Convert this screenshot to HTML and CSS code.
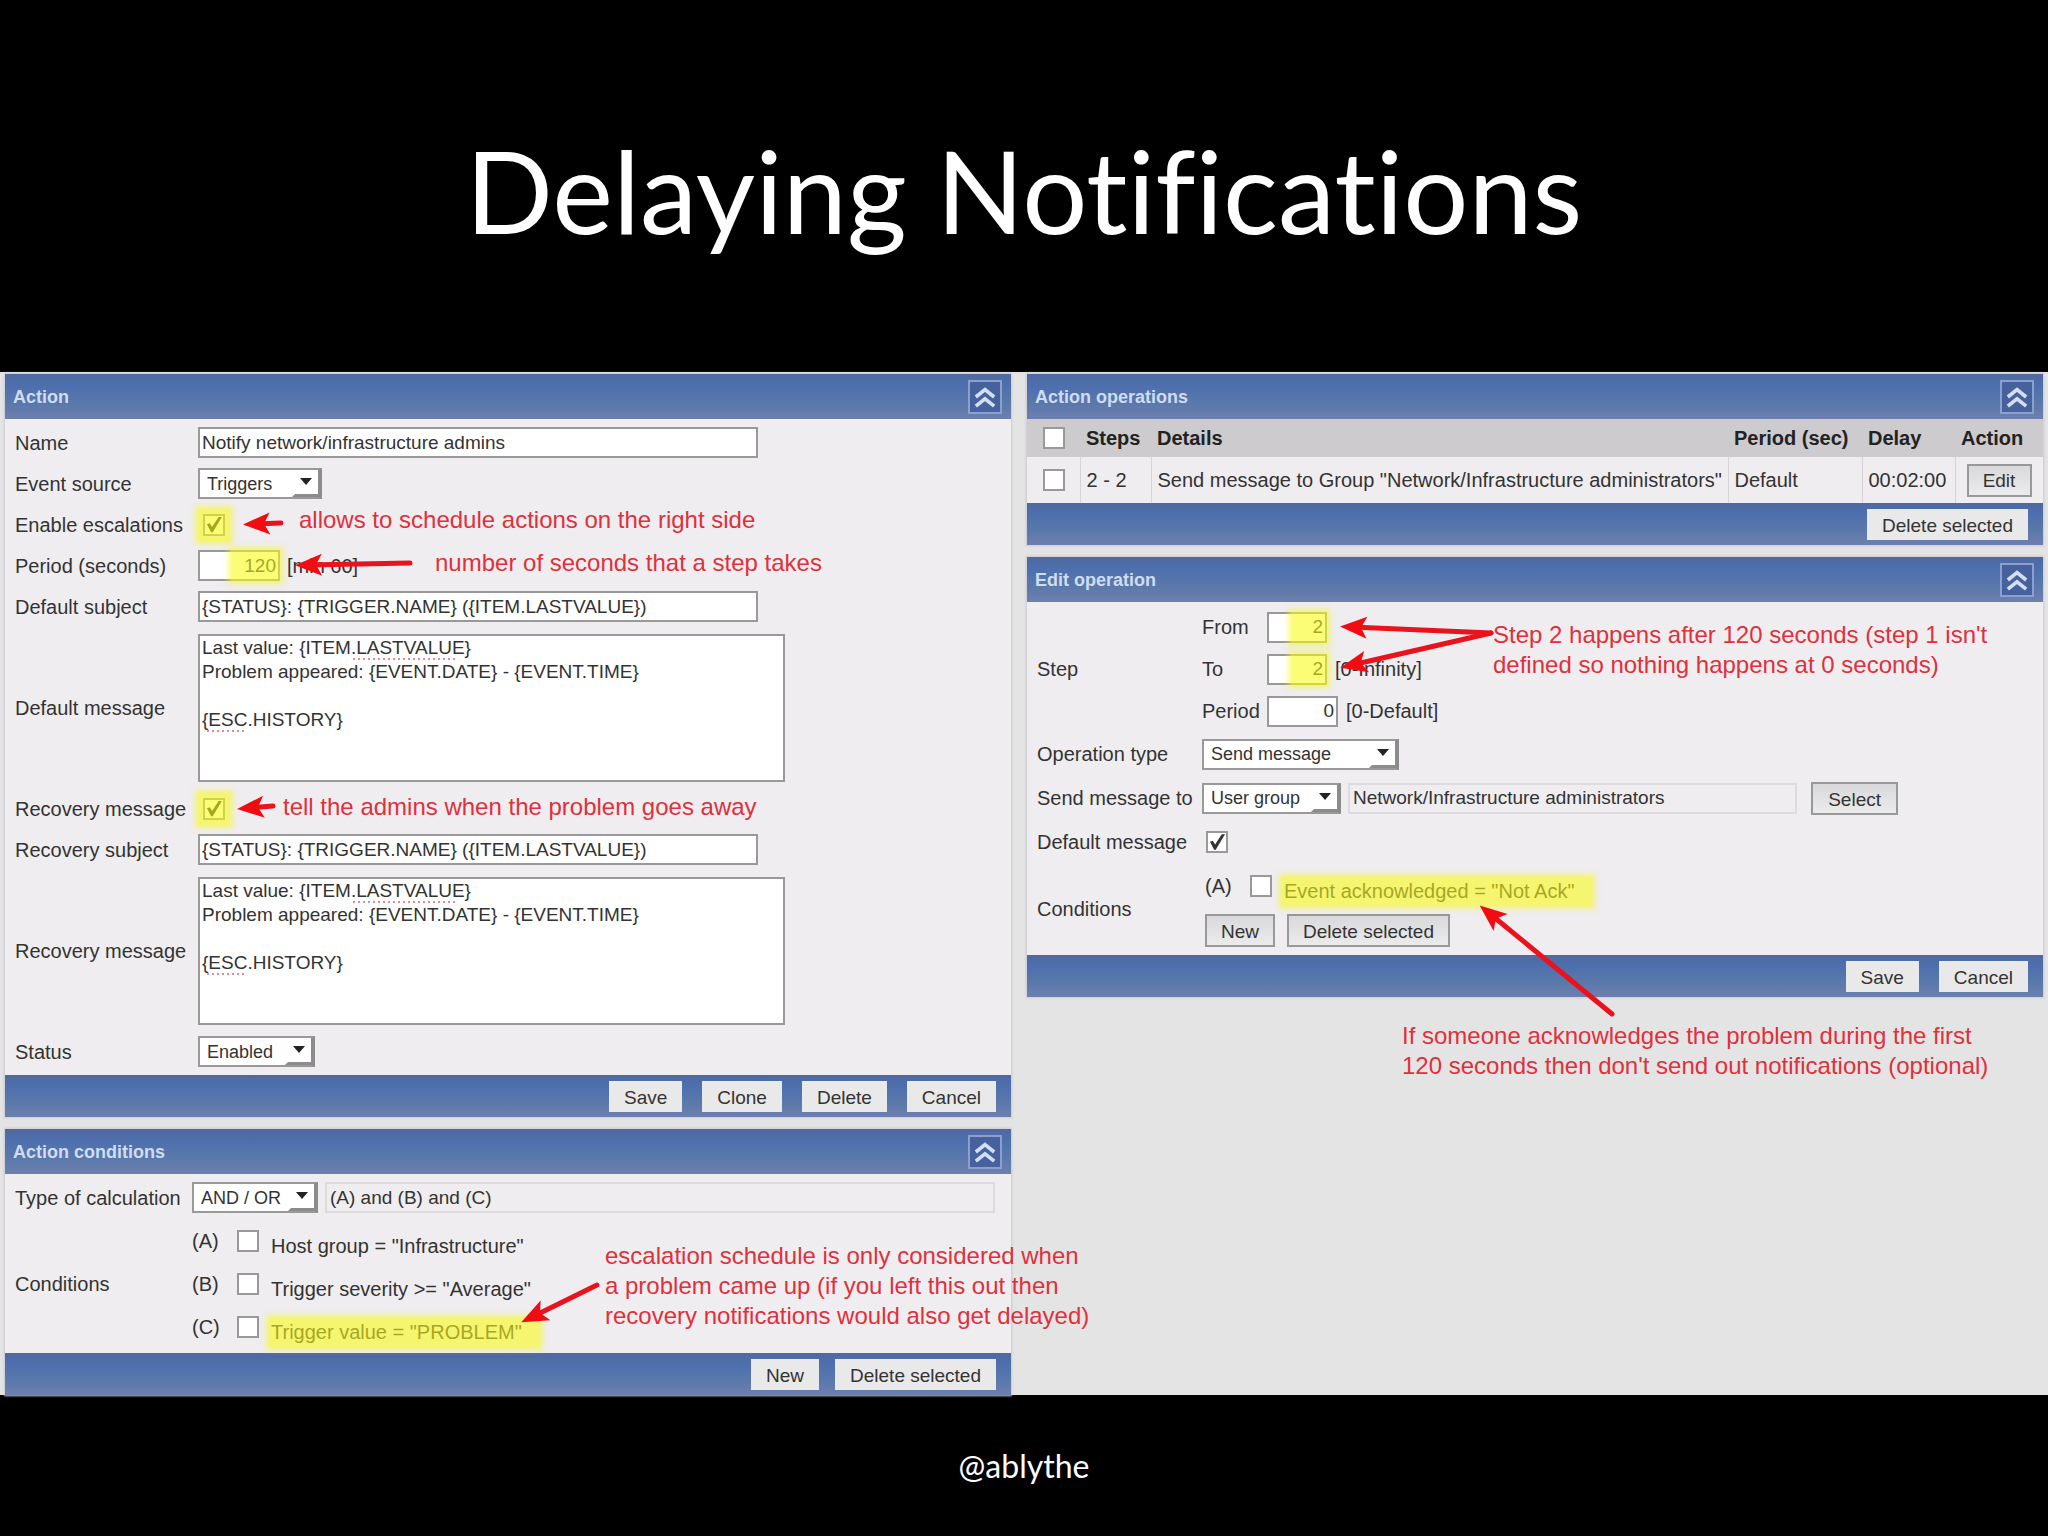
FILE: index.html
```html
<!DOCTYPE html>
<html lang="en">
<head>
    <meta charset="utf-8">
    <title>Delaying Notifications</title>
    <link rel="stylesheet" href="styles.css">
</head>
<body>
    <!-- shared symbols -->
    <svg class="defs" width="0" height="0" aria-hidden="true">
        <defs>
            <marker id="head" viewBox="-28 -12 28 24" refX="-12" refY="0" markerWidth="28" markerHeight="24" markerUnits="userSpaceOnUse" orient="auto">
                <path d="M0 0 L-27 -11 L-21 0 L-27 11 Z" fill="#f00c10"/>
            </marker>
            <symbol id="chevrons" viewBox="0 0 24 24">
                <path d="M2 12 L12 4 L22 12 M2 22 L12 14 L22 22" fill="none" stroke="#d3def5" stroke-width="4"/>
            </symbol>
        </defs>
    </svg>

    <header class="slide-title">
        <h1>Delaying Notifications</h1>
    </header>

    <main class="board">
        <div class="column">
            <section class="panel action">
                <div class="bar head">
                    <h2>Action</h2>
                    <button class="collapse" aria-label="Collapse"><svg><use href="#chevrons"/></svg></button>
                </div>
                <div class="form">
                    <div class="row">
                        <label for="name">Name</label>
                        <input type="text" id="name" class="text" value="Notify network/infrastructure admins">
                    </div>
                    <div class="row">
                        <label for="source">Event source</label>
                        <select id="source" class="w-source"><option>Triggers</option></select>
                    </div>
                    <div class="row">
                        <label for="escalations">Enable escalations</label>
                        <span class="mark mark-check"><input type="checkbox" id="escalations" checked></span>
                    </div>
                    <div class="row">
                        <label for="period">Period (seconds)</label>
                        <div class="inline">
                            <span class="mark mark-number"><input type="text" id="period" class="number w-period" value="120"></span>
                            <span>[min 60]</span>
                        </div>
                    </div>
                    <div class="row">
                        <label for="subject">Default subject</label>
                        <input type="text" id="subject" class="text" value="{STATUS}: {TRIGGER.NAME} ({ITEM.LASTVALUE})">
                    </div>
                    <div class="row tall">
                        <label for="message">Default message</label>
                        <textarea id="message" spellcheck="false">Last value: {ITEM.LASTVALUE}
Problem appeared: {EVENT.DATE} - {EVENT.TIME}

{ESC.HISTORY}</textarea>
                    </div>
                    <div class="row">
                        <label for="recovery">Recovery message</label>
                        <span class="mark mark-check"><input type="checkbox" id="recovery" checked></span>
                    </div>
                    <div class="row">
                        <label for="rsubject">Recovery subject</label>
                        <input type="text" id="rsubject" class="text" value="{STATUS}: {TRIGGER.NAME} ({ITEM.LASTVALUE})">
                    </div>
                    <div class="row tall">
                        <label for="rmessage">Recovery message</label>
                        <textarea id="rmessage" spellcheck="false">Last value: {ITEM.LASTVALUE}
Problem appeared: {EVENT.DATE} - {EVENT.TIME}

{ESC.HISTORY}</textarea>
                    </div>
                    <div class="row">
                        <label for="status">Status</label>
                        <select id="status" class="w-status"><option>Enabled</option></select>
                    </div>
                </div>
                <div class="bar foot">
                    <button>Save</button>
                    <button>Clone</button>
                    <button>Delete</button>
                    <button>Cancel</button>
                </div>
                <svg class="arrows" aria-hidden="true">
                    <path d="M276 149 L250 150"/>
                    <path d="M405 189 L302 191"/>
                    <path d="M268 432 L244 434"/>
                </svg>
                <p class="note note-escalations">allows to schedule actions on the right side</p>
                <p class="note note-period">number of seconds that a step takes</p>
                <p class="note note-recovery">tell the admins when the problem goes away</p>
            </section>

            <section class="panel conditions">
                <div class="bar head">
                    <h2>Action conditions</h2>
                    <button class="collapse" aria-label="Collapse"><svg><use href="#chevrons"/></svg></button>
                </div>
                <div class="form">
                    <div class="row">
                        <label for="calc">Type of calculation</label>
                        <div class="inline">
                            <select id="calc" class="w-calc"><option>AND / OR</option></select>
                            <input type="text" class="readonly" value="(A) and (B) and (C)" aria-label="Expression" readonly>
                        </div>
                    </div>
                    <div class="row">
                        <span class="label">Conditions</span>
                        <div>
                            <div class="condition">
                                <span>(A)</span><input type="checkbox" id="ca">
                                <label for="ca">Host group = "Infrastructure"</label>
                            </div>
                            <div class="condition">
                                <span>(B)</span><input type="checkbox" id="cb">
                                <label for="cb">Trigger severity &gt;= "Average"</label>
                            </div>
                            <div class="condition">
                                <span>(C)</span><input type="checkbox" id="cc">
                                <label for="cc" class="mark mark-text">Trigger value = "PROBLEM"</label>
                            </div>
                        </div>
                    </div>
                </div>
                <div class="bar foot close">
                    <button>New</button>
                    <button>Delete selected</button>
                </div>
                <svg class="arrows" aria-hidden="true">
                    <path d="M592 156 L527 188"/>
                </svg>
                <p class="note note-schedule">escalation schedule is only considered when<br>a problem came up (if you left this out then<br>recovery notifications would also get delayed)</p>
            </section>
        </div>

        <div class="column">
            <section class="panel operations">
                <div class="bar head">
                    <h2>Action operations</h2>
                    <button class="collapse" aria-label="Collapse"><svg><use href="#chevrons"/></svg></button>
                </div>
                <table>
                    <thead>
                        <tr>
                            <th class="c-check"><input type="checkbox" aria-label="Select all"></th>
                            <th class="c-steps">Steps</th>
                            <th>Details</th>
                            <th class="c-period">Period (sec)</th>
                            <th class="c-delay">Delay</th>
                            <th class="c-action">Action</th>
                        </tr>
                    </thead>
                    <tbody>
                        <tr>
                            <td class="c-check"><input type="checkbox" aria-label="Select step"></td>
                            <td>2 - 2</td>
                            <td>Send message to Group "Network/Infrastructure administrators"</td>
                            <td>Default</td>
                            <td>00:02:00</td>
                            <td class="c-action"><button>Edit</button></td>
                        </tr>
                    </tbody>
                </table>
                <div class="bar foot">
                    <button>Delete selected</button>
                </div>
            </section>

            <section class="panel edit">
                <div class="bar head">
                    <h2>Edit operation</h2>
                    <button class="collapse" aria-label="Collapse"><svg><use href="#chevrons"/></svg></button>
                </div>
                <div class="form">
                    <div class="row">
                        <span class="label">Step</span>
                        <div>
                            <div class="step">
                                <label for="from">From</label>
                                <span class="mark mark-number"><input type="text" id="from" class="number w-step" value="2"></span>
                            </div>
                            <div class="step">
                                <label for="to">To</label>
                                <span class="mark mark-number"><input type="text" id="to" class="number w-step" value="2"></span>
                                <span>[0-Infinity]</span>
                            </div>
                            <div class="step">
                                <label for="speriod">Period</label>
                                <input type="text" id="speriod" class="number w-speriod" value="0">
                                <span>[0-Default]</span>
                            </div>
                        </div>
                    </div>
                    <div class="row">
                        <label for="optype">Operation type</label>
                        <select id="optype" class="w-optype"><option>Send message</option></select>
                    </div>
                    <div class="row">
                        <label for="sendto">Send message to</label>
                        <div class="inline">
                            <select id="sendto" class="w-sendto"><option>User group</option></select>
                            <input type="text" class="readonly" value="Network/Infrastructure administrators" aria-label="Group" readonly>
                            <button class="pick">Select</button>
                        </div>
                    </div>
                    <div class="row">
                        <label for="defmsg">Default message</label>
                        <input type="checkbox" id="defmsg" class="defmsg" checked>
                    </div>
                    <div class="row">
                        <span class="label">Conditions</span>
                        <div>
                            <div class="condition">
                                <span>(A)</span><input type="checkbox" id="ea">
                                <label for="ea" class="mark mark-text">Event acknowledged = "Not Ack"</label>
                            </div>
                            <div class="inline tools">
                                <button>New</button>
                                <button>Delete selected</button>
                            </div>
                        </div>
                    </div>
                </div>
                <div class="bar foot">
                    <button>Save</button>
                    <button>Cancel</button>
                </div>
                <svg class="arrows" aria-hidden="true">
                    <path d="M464 76 L325 70"/>
                    <path d="M464 76 L325 108"/>
                    <path d="M585 457 L462 356"/>
                </svg>
                <p class="note note-step">Step 2 happens after 120 seconds (step 1 isn't<br>defined so nothing happens at 0 seconds)</p>
                <p class="note note-ack">If someone acknowledges the problem during the first<br>120 seconds then don't send out notifications (optional)</p>
            </section>
        </div>
    </main>

    <footer class="credit">@ablythe</footer>
</body>
</html>
```
FILE: styles.css
```css
* {
    margin: 0;
    padding: 0;
    box-sizing: border-box;
}

body {
    min-height: 100vh;
    display: flex;
    flex-direction: column;
    background: #000;
    color: #333;
    font-family: "Liberation Sans", Arial, sans-serif;
    font-size: 20px;
    line-height: 24px;
}

.defs {
    position: absolute;
}

.slide-title {
    padding: 117px 0 111px;
    text-align: center;
}

h1 {
    color: #fff;
    font-family: Lato, sans-serif;
    font-size: 115px;
    font-weight: 400;
    font-variant-ligatures: none;
    line-height: 144px;
}

.credit {
    flex: 1;
    display: flex;
    justify-content: center;
    align-items: center;
    color: #fff;
    font-family: Lato, sans-serif;
    font-size: 32px;
}

.board {
    display: grid;
    grid-template-columns: 1006fr 1016fr;
    gap: 16px;
    padding: 2px 5px 0;
    background: #e4e4e5;
}

.column {
    display: flex;
    flex-direction: column;
    gap: 12px;
}

/* panels */

.panel {
    position: relative;
    background: #efedef;
    box-shadow: 0 0 2px 1px #c9c9d0;
}

.bar {
    display: flex;
    align-items: center;
    background: linear-gradient(#50699f, #4d6fae 25%, #5877ab 60%, #6d80ae);
}

.head {
    min-height: 45px;
    justify-content: space-between;
    padding: 0 9px 0 8px;
}

.foot {
    min-height: 42px;
    justify-content: flex-end;
    gap: 20px;
    padding: 0 15px;
}

.foot.close {
    gap: 16px;
}

h2 {
    color: #d0dcf2;
    font-size: 18px;
    font-weight: 700;
}

.collapse {
    width: 34px;
    height: 34px;
    padding: 4px;
    border: 2px solid #8ba0d0;
    background: #46619c;
}

.collapse svg {
    display: block;
    width: 22px;
    height: 22px;
}

/* forms */

.form {
    padding: 3px 0;
}

.row {
    display: grid;
    grid-template-columns: 193px 1fr;
    align-items: center;
    justify-items: start;
    min-height: 41px;
}

.row.tall {
    min-height: 161px;
}

.row > label,
.row > .label {
    padding-left: 10px;
    white-space: nowrap;
}

.inline {
    display: flex;
    align-items: center;
    gap: 7px;
}

input,
select,
textarea,
button {
    font: inherit;
    font-size: 19px;
    color: #333;
}

input[type="text"] {
    height: 31px;
    padding: 0 2px;
    border: 2px solid #999;
    background: #fff;
}

input.text {
    width: 560px;
}

textarea {
    display: block;
    width: 587px;
    height: 148px;
    padding: 0 2px;
    border: 2px solid #999;
    resize: none;
    background:
        repeating-linear-gradient(90deg, #e58a92 0 2px, transparent 2px 5px) 153px 22px / 104px 2px no-repeat,
        repeating-linear-gradient(90deg, #e58a92 0 2px, transparent 2px 5px) 7px 94px / 40px 2px no-repeat,
        #fff;
}

input.number {
    text-align: right;
}

input.readonly {
    flex: 1;
    padding: 0 3px;
    border: 2px solid #dddbde;
    background: #efedef;
}

select {
    appearance: none;
    height: 31px;
    padding: 0 7px;
    border: 2px solid #999;
    border-right: 4px solid #8c8c8c;
    border-radius: 0;
    font-size: 18px;
    background:
        url("data:image/svg+xml,%3Csvg xmlns='http://www.w3.org/2000/svg' width='26' height='27'%3E%3Cpath d='M8 8h12l-6 7z' fill='%23222'/%3E%3Cpath d='M0 27l3-3h23v3z' fill='%238c8c8c'/%3E%3C/svg%3E") right center no-repeat,
        #fff;
}

input[type="checkbox"] {
    appearance: none;
    display: block;
    position: relative;
    width: 22px;
    height: 22px;
    border: 2px solid #999;
    background: #fff;
}

input[type="checkbox"]:checked::after {
    content: "";
    position: absolute;
    inset: 1px;
    background: #333;
    clip-path: polygon(6% 48%, 24% 42%, 38% 66%, 80% 2%, 100% 2%, 42% 98%, 32% 98%);
}

button {
    height: 31px;
    padding: 4px 15px 0;
    border: 0;
    background: #e9e9ea;
}

button.pick,
.tools button,
td button {
    height: 33px;
    border: 2px solid #999;
    background: linear-gradient(#d9d9dc, #ebebec);
}

.tools button {
    padding: 4px 14px 0;
}

.w-source { width: 124px; }
.w-status { width: 117px; }
.w-period { width: 82px; }
.w-calc { width: 126px; }
.w-step { width: 60px; }
.w-speriod { width: 71px; }
.w-optype { width: 197px; }
.w-sendto { width: 139px; }

/* highlighter */

.mark {
    position: relative;
}

.mark::after {
    content: "";
    position: absolute;
    inset: 0;
    background: rgba(250, 252, 20, 0.58);
    box-shadow: 0 0 5px 3px rgba(250, 252, 20, 0.5);
    pointer-events: none;
}

.mark-check {
    padding: 0 5px;
}

.mark-check::after {
    inset: -5px 0;
}

.mark-number::after {
    left: 40%;
}

/* conditions */

.condition {
    display: flex;
    align-items: center;
    min-height: 43px;
}

.condition span {
    width: 45px;
}

.condition label {
    margin: 11px 0 0 12px;
}

.mark-text::after {
    inset: -2px -18px -3px -2px;
}

.conditions .row {
    grid-template-columns: 187px 1fr;
    min-height: 43px;
}

.conditions .row > .inline {
    width: 100%;
    padding-right: 16px;
}

.conditions .form {
    padding: 2px 0 5px;
}

/* operations table */

table {
    width: 100%;
    border-collapse: collapse;
}

th {
    height: 38px;
    padding-left: 6px;
    background: #cdcbcd;
    color: #222;
    font-size: 20px;
    text-align: left;
    white-space: nowrap;
}

td {
    height: 46px;
    padding-left: 6px;
    border-left: 1px solid #d5d3d6;
    white-space: nowrap;
}

td:first-child {
    border-left: 0;
}

td button {
    width: 65px;
    padding: 2px 0 0;
}

.c-check { width: 53px; }
.c-check.c-check { padding-left: 16px; }
.c-steps { width: 71px; }
.c-period { width: 134px; }
.c-delay { width: 93px; }
.c-action { width: 88px; }
td.c-action { padding-left: 11px; }

/* edit operation */

.edit .row {
    grid-template-columns: 175px 1fr;
    min-height: 44px;
}

.edit .form {
    padding: 4px 0 2px;
}

.edit .row > .inline {
    width: 100%;
    padding-right: 145px;
}

.step {
    display: flex;
    align-items: center;
    min-height: 42px;
}

.step label {
    width: 65px;
}

.step > span:last-child:not(.mark) {
    margin-left: 8px;
}

.pick {
    margin-left: 7px;
}

.defmsg {
    margin-left: 4px;
}

.edit .condition,
.tools {
    padding-left: 3px;
}

.tools {
    gap: 12px;
    min-height: 46px;
}

/* hand-drawn remarks */

.arrows {
    position: absolute;
    inset: 0;
    width: 100%;
    height: 100%;
    overflow: visible;
    pointer-events: none;
}

.arrows path {
    fill: none;
    stroke: #e8131c;
    stroke-width: 5;
    stroke-linecap: round;
    marker-end: url(#head);
}

.note {
    position: absolute;
    z-index: 1;
    color: #e0303c;
    font-size: 24px;
    line-height: 30px;
    white-space: nowrap;
}

.note-escalations { left: 294px; top: 131px; }
.note-period { left: 430px; top: 174px; }
.note-recovery { left: 278px; top: 418px; }
.note-schedule { left: 600px; top: 112px; }
.note-step { left: 466px; top: 63px; }
.note-ack { left: 375px; top: 464px; }
```
